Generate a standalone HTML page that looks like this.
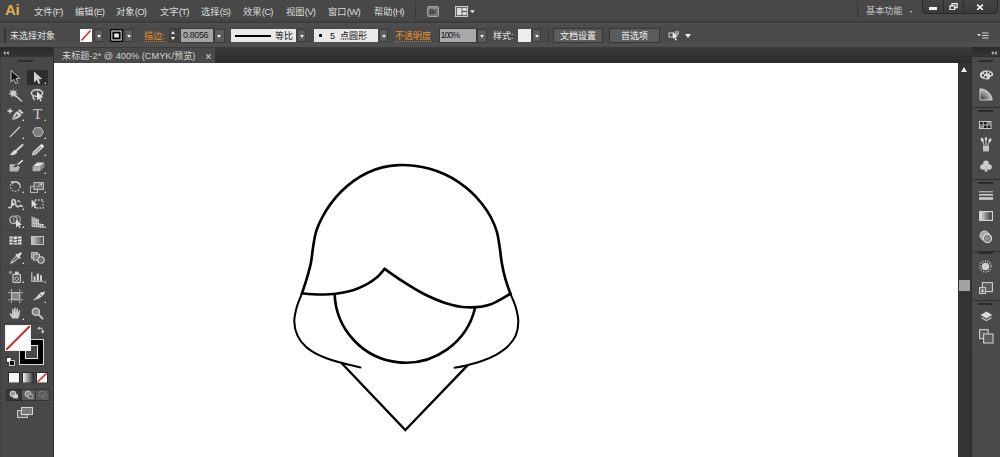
<!DOCTYPE html>
<html lang="zh-CN">
<head>
<meta charset="utf-8">
<title>未标题-2* @ 400% (CMYK/预览)</title>
<style>
html,body{margin:0;padding:0;}
body{width:1000px;height:457px;overflow:hidden;position:relative;background:#2f2f2f;
  font-family:"Liberation Sans","Noto Sans CJK SC",sans-serif;color:#e4e4e4;font-size:10px;line-height:1;}
.abs{position:absolute;}
#menubar{left:0;top:0;width:1000px;height:22px;background:linear-gradient(#484848 0,#484848 19px,#444 20px,#424242 22px);}
#menubar .mi{position:absolute;top:6.4px;font-size:9.2px;line-height:11px;color:#dcdcdc;white-space:nowrap;letter-spacing:0;}
#ctrlbar{left:0;top:22px;width:1000px;height:25px;border-top:1px solid #393939;box-sizing:border-box;background:linear-gradient(#515151 0,#4d4d4d 2px,#4a4a4a 5px,#4a4a4a 19px,#505050 20px,#4e4e4e 24px);}
#ctrlbar .t{position:absolute;font-size:9px;line-height:10px;white-space:nowrap;color:#e2e2e2;}
#tabbar{left:0;top:47px;width:1000px;height:16px;background:linear-gradient(#3c3c3c,#2b2b2b);}
#tab{left:54px;top:48px;width:161px;height:15px;background:#494949;border-radius:1px 1px 0 0;}
#canvas{left:54px;top:62.5px;width:904.3px;height:394.5px;background:#fff;}
#toolbar{left:0;top:57px;width:53px;height:400px;background:#484848;box-shadow:inset 1px 0 0 #3e3e3e;}
#toolhead{left:0;top:47px;width:53px;height:10px;background:linear-gradient(#2a2a2a,#363636);}
#vscroll{left:958.3px;top:62.5px;width:12.7px;height:394.5px;background:#343434;box-shadow:1px 0 0 #2b2b2b;}
#dock{left:971.8px;top:56px;width:28.2px;height:401px;background:#494949;}
#dockhead{left:972px;top:47px;width:28px;height:9px;background:linear-gradient(#2a2a2a,#363636);}
#menubar .la{font-size:9.6px;letter-spacing:-0.8px;margin-left:0.4px;}
.dd{position:absolute;width:9px;height:13px;background:#5c5c5c;border:1px solid #3a3a3a;box-sizing:border-box;}
.dd:after{content:"";position:absolute;left:2px;top:5px;border-left:2.5px solid transparent;border-right:2.5px solid transparent;border-top:3px solid #f0f0f0;}
.cn{position:absolute;width:0;height:0;border-left:2.5px solid transparent;border-bottom:2.5px solid #d6d6d6;}
.grp{position:absolute;left:0;width:28.2px;background:#4a4a4a;border-top:1px solid #2e2e2e;box-sizing:border-box;}
.grip{position:absolute;height:2px;background:#2c2c2c;}
.sep{position:absolute;left:5px;width:43px;height:1px;background:#404040;box-shadow:0 1px 0 #4c4c4c;}
</style>
</head>
<body>

<!-- ===== menu bar ===== -->
<div id="menubar" class="abs">
  <div class="abs" style="left:5px;top:2px;font-size:15px;line-height:16px;font-weight:bold;color:#e3ae4c;letter-spacing:-0.3px;">Ai</div>
  <div class="mi" style="left:34px;">文件<span class="la">(F)</span></div>
  <div class="mi" style="left:75px;">编辑<span class="la">(E)</span></div>
  <div class="mi" style="left:116px;">对象<span class="la">(O)</span></div>
  <div class="mi" style="left:160px;">文字<span class="la">(T)</span></div>
  <div class="mi" style="left:201px;">选择<span class="la">(S)</span></div>
  <div class="mi" style="left:243px;">效果<span class="la">(C)</span></div>
  <div class="mi" style="left:286px;">视图<span class="la">(V)</span></div>
  <div class="mi" style="left:328px;">窗口<span class="la">(W)</span></div>
  <div class="mi" style="left:374px;">帮助<span class="la">(H)</span></div>
  <div class="abs" style="left:415px;top:3px;width:1px;height:16px;background:#383838;"></div>
  <div class="mi" style="left:866px;top:5.5px;color:#c6c6c6;font-size:9.2px;">基本功能</div>
  <!-- Bridge icon -->
  <div class="abs" style="left:426.5px;top:6px;width:12.5px;height:10.5px;background:linear-gradient(#8a8a8a,#747474);border:1px solid #a2a2a2;border-radius:1.5px;box-sizing:border-box;"></div>
  <div class="abs" style="left:426.5px;top:7.5px;width:12.5px;text-align:center;font-size:7px;line-height:8px;font-weight:bold;color:#343434;letter-spacing:-0.2px;">Br</div>
  <!-- arrange documents icon -->
  <svg class="abs" style="left:455px;top:5.5px;" width="20.5" height="11" viewBox="0 0 22 12" preserveAspectRatio="none"><rect x="0.5" y="0.5" width="13" height="11" fill="#555" stroke="#d6d6d6" stroke-width="1"/><rect x="2" y="2" width="5" height="8" fill="#dcdcdc"/><rect x="8" y="2" width="4.5" height="3.4" fill="#dcdcdc"/><rect x="8" y="6.6" width="4.5" height="3.4" fill="#dcdcdc"/><path d="M16 4.6 L21.4 4.6 L18.7 8 Z" fill="#e6e6e6"/></svg>
  <div class="abs" style="left:857px;top:3px;width:1px;height:14px;background:#363636;"></div>
  <!-- workspace arrow -->
  <div class="abs" style="left:909.5px;top:11px;border-left:1.8px solid transparent;border-right:1.8px solid transparent;border-top:2.2px solid #d0d0d0;"></div>
  <!-- window buttons -->
  <div class="abs" style="left:922px;top:-1px;width:76px;height:15px;background:linear-gradient(#454545,#3b3b3b);border:1px solid #2a2a2a;border-radius:0 0 4px 4px;box-sizing:border-box;"></div>
  <div class="abs" style="left:943px;top:0;width:1px;height:13px;background:#2c2c2c;"></div>
  <div class="abs" style="left:963px;top:0;width:1px;height:13px;background:#2c2c2c;"></div>
  <div class="abs" style="left:929px;top:7px;width:8px;height:2.5px;background:#f2f2f2;"></div>
  <svg class="abs" style="left:948.5px;top:2.8px;" width="9" height="7.6" viewBox="0 0 10 9"><rect x="3.2" y="0.8" width="6" height="4.6" fill="none" stroke="#f2f2f2" stroke-width="1.5"/><rect x="0.8" y="3.4" width="5.6" height="4.6" fill="#474747" stroke="#f2f2f2" stroke-width="1.5"/></svg>
  <svg class="abs" style="left:976.3px;top:3.6px;" width="8" height="6.6" viewBox="0 0 9 8"><path d="M1 0.8 L8 7.2 M8 0.8 L1 7.2" stroke="#f4f4f4" stroke-width="1.9"/></svg>

</div>

<!-- ===== control bar ===== -->
<div id="ctrlbar" class="abs">
  <div class="abs" style="left:4px;top:5px;width:2px;height:15px;background:#353535;"></div>
  <div class="t" style="left:10px;top:8px;">未选择对象</div>
  <!-- fill swatch -->
  <svg class="abs" style="left:80px;top:6px;" width="12" height="13" viewBox="0 0 12 13"><rect x="0" y="0" width="12" height="13" fill="#fff"/><line x1="1.5" y1="11.5" x2="10.5" y2="1.5" stroke="#d2232a" stroke-width="1.4"/></svg>
  <div class="dd" style="left:94px;top:6px;"></div>
  <!-- stroke swatch -->
  <svg class="abs" style="left:109.5px;top:6px;" width="13" height="13" viewBox="0 0 14 13" preserveAspectRatio="none"><rect x="0" y="0" width="14" height="13" fill="#000"/><rect x="2" y="2" width="10" height="9" fill="none" stroke="#fff" stroke-width="1"/><rect x="4.5" y="4.5" width="5" height="4" fill="#e8e8e8"/></svg>
  <div class="dd" style="left:124px;top:6px;"></div>
  <div class="t" style="left:144px;top:8px;color:#e8932c;border-bottom:1px dotted #c07a28;padding-bottom:0;">描边:</div>
  <!-- spinner -->
  <div class="abs" style="left:169px;top:5px;width:10px;height:15px;background:#424242;border:1px solid #3a3a3a;box-sizing:border-box;"></div>
  <div class="abs" style="left:171px;top:8px;border-left:2.5px solid transparent;border-right:2.5px solid transparent;border-bottom:3px solid #eee;"></div>
  <div class="abs" style="left:171px;top:14px;border-left:2.5px solid transparent;border-right:2.5px solid transparent;border-top:3px solid #eee;"></div>
  <div class="abs" style="left:180px;top:5px;width:34px;height:15px;background:#a4a4a4;border:1px solid #3a3a3a;box-sizing:border-box;"></div>
  <div class="t" style="left:183px;top:7px;color:#1c1c1c;letter-spacing:-0.4px;">0.8056</div>
  <div class="dd" style="left:214px;top:5.5px;height:14px;width:10.5px;"></div>
  <!-- stroke profile -->
  <div class="abs" style="left:231px;top:6px;width:65px;height:13px;background:#e9e9e9;"></div>
  <div class="abs" style="left:235px;top:12px;width:36px;height:2px;background:#000;"></div>
  <div class="t" style="left:275px;top:8px;color:#111;">等比</div>
  <div class="dd" style="left:297px;top:6px;"></div>
  <!-- brush -->
  <div class="abs" style="left:314px;top:6px;width:64px;height:13px;background:#e9e9e9;"></div>
  <div class="abs" style="left:319px;top:11px;width:3px;height:3px;background:#000;border-radius:1px;"></div>
  <div class="t" style="left:330px;top:8px;color:#111;">5&nbsp; 点圆形</div>
  <div class="dd" style="left:379px;top:6px;"></div>
  <div class="t" style="left:395px;top:8px;color:#e8932c;border-bottom:1px dotted #c07a28;">不透明度</div>
  <div class="abs" style="left:438.5px;top:5px;width:38.5px;height:15px;background:#a9a9a9;border:1px solid #3a3a3a;box-sizing:border-box;"></div>
  <div class="t" style="left:440.5px;top:7px;color:#1c1c1c;letter-spacing:-1.1px;">100%</div>
  <div class="dd" style="left:477px;top:5.5px;height:14px;width:10px;"></div>
  <div class="t" style="left:493px;top:8px;">样式:</div>
  <div class="abs" style="left:518px;top:6px;width:13px;height:13px;background:#ededed;"></div>
  <div class="dd" style="left:532px;top:6px;"></div>
  <div class="abs" style="left:548px;top:3px;width:1px;height:19px;background:#3a3a3a;"></div>
  <div class="abs" style="left:553px;top:5px;width:50px;height:15px;background:#5b5b5b;border:1px solid #363636;box-sizing:border-box;"></div>
  <div class="t" style="left:553px;top:8px;width:50px;text-align:center;color:#f2f2f2;">文档设置</div>
  <div class="abs" style="left:609px;top:5px;width:51px;height:15px;background:#5b5b5b;border:1px solid #363636;box-sizing:border-box;"></div>
  <div class="t" style="left:609px;top:8px;width:51px;text-align:center;color:#f2f2f2;">首选项</div>
  <!-- misc icon -->
  <svg class="abs" style="left:668px;top:7px;" width="13" height="12" viewBox="0 0 13 12"><rect x="1" y="3" width="4" height="4" fill="none" stroke="#cfcfcf" stroke-width="1"/><rect x="7" y="1" width="4" height="4" fill="#9a9a9a"/><path d="M5 2 L10 6.5 L7.5 7 L9 10 L7.5 10.5 L6.3 7.6 L5 9 Z" fill="#e6e6e6"/></svg>
  <div class="abs" style="left:685px;top:11px;border-left:3px solid transparent;border-right:3px solid transparent;border-top:4px solid #eee;"></div>
  <!-- panel menu icon -->
  <svg class="abs" style="left:977px;top:9px;" width="12" height="8" viewBox="0 0 12 8"><path d="M0 2 L4 2 L2 4.5 Z" fill="#d8d8d8"/><rect x="5" y="0.5" width="6.5" height="1" fill="#d0d0d0"/><rect x="5" y="3" width="6.5" height="1" fill="#d0d0d0"/><rect x="5" y="5.5" width="6.5" height="1" fill="#d0d0d0"/></svg>
</div>

<!-- ===== tab bar ===== -->
<div id="tabbar" class="abs"></div>
<div id="tab" class="abs">
  <div class="abs" style="left:8px;top:3px;font-size:9.2px;line-height:11px;color:#d4d4d4;white-space:nowrap;">未标题-2* @ 400% (CMYK/预览)</div>
  <svg class="abs" style="left:151.5px;top:6px;" width="5" height="5" viewBox="0 0 6 6"><path d="M0.5 0.5 L5.5 5.5 M5.5 0.5 L0.5 5.5" stroke="#c8c8c8" stroke-width="1.3"/></svg>
</div>

<!-- ===== canvas ===== -->
<div id="canvas" class="abs">
<svg width="904" height="394" viewBox="54 63 904 394" style="position:absolute;left:0;top:0.5px;" fill="none" stroke="#000" stroke-width="2.65" stroke-linecap="round" stroke-linejoin="round">
  <path d="M302.0 293.3 C302.8 290.8 305.4 283.2 306.9 278.1 C308.4 273.0 309.9 267.9 310.9 262.7 C312.0 257.5 312.2 252.1 313.1 246.9 C314.0 241.7 314.6 236.4 316.2 231.3 C317.7 226.3 320.0 221.5 322.5 216.8 C324.9 212.2 327.9 207.6 331.0 203.4 C334.2 199.1 337.7 195.0 341.5 191.3 C345.3 187.5 349.4 184.0 353.7 180.9 C358.0 177.8 362.6 175.0 367.4 172.7 C372.2 170.5 377.2 168.7 382.3 167.4 C387.5 166.2 392.8 165.4 398.1 165.1 C403.4 164.8 408.8 165.1 414.1 165.7 C419.3 166.3 424.6 167.3 429.7 168.8 C434.8 170.2 439.9 172.1 444.7 174.3 C449.5 176.5 454.2 179.2 458.6 182.1 C463.0 185.0 467.2 188.4 471.1 192.0 C475.0 195.5 478.6 199.5 481.9 203.7 C485.2 207.8 488.2 212.3 490.7 217.0 C493.2 221.6 495.3 226.6 496.8 231.6 C498.3 236.7 498.8 242.0 499.7 247.2 C500.5 252.5 500.9 257.9 501.8 263.1 C502.7 268.3 503.8 273.5 505.3 278.6 C506.7 283.7 509.5 291.2 510.4 293.7"/><!-- dome -->
  <path d="M302.0 293.3 C303.8 293.5 309.3 294.1 313.0 294.3 C316.8 294.5 320.6 294.6 324.4 294.5 C328.1 294.4 332.0 294.1 335.8 293.7 C339.5 293.2 343.3 292.6 347.0 291.7 C350.7 290.8 354.3 289.8 357.8 288.4 C361.3 287.1 364.7 285.5 367.9 283.7 C371.1 281.8 374.2 279.7 377.0 277.3 C379.8 274.8 383.3 270.3 384.6 268.9"/><!-- fringeL -->
  <path d="M384.6 268.9 C387.7 271.0 396.7 277.6 403.2 281.7 C409.7 285.9 416.5 290.2 423.5 293.8 C430.5 297.3 437.8 300.7 445.1 302.9 C452.4 305.2 459.9 307.0 467.3 307.3 C474.7 307.6 482.3 307.1 489.4 304.8 C496.6 302.6 506.9 295.6 510.4 293.7"/><!-- fringeR -->
  <path stroke-width="2.05" d="M302.0 293.3 C301.1 295.6 298.1 302.2 296.8 307.0 C295.5 311.7 294.2 316.9 294.3 321.7 C294.4 326.5 295.5 331.4 297.5 335.6 C299.4 339.8 302.4 343.5 305.9 346.7 C309.3 349.9 313.6 352.4 318.0 354.7 C322.4 357.0 327.4 358.7 332.3 360.3 C337.1 361.9 342.2 363.1 346.9 364.2 C351.6 365.4 358.2 366.9 360.5 367.4"/><!-- sideL -->
  <path stroke-width="2.05" d="M510.4 293.7 C511.3 295.9 514.4 302.4 515.7 307.1 C517.0 311.7 518.3 316.9 518.3 321.6 C518.3 326.3 517.6 331.1 515.8 335.3 C514.0 339.4 511.0 343.2 507.7 346.5 C504.4 349.7 500.2 352.4 496.0 354.8 C491.8 357.2 487.0 359.1 482.4 360.7 C477.8 362.4 472.9 363.7 468.2 364.9 C463.6 366.1 456.9 367.3 454.6 367.8"/><!-- sideR -->
  <path d="M334.64 294 A71.2 71.2 0 0 0 475.11 307.8"/><!-- face -->
  <path stroke-width="2.3" d="M341.5 363 L405.3 430 L467.3 365.6" stroke-linejoin="miter"/><!-- chin -->
</svg>
</div>

<!-- ===== left toolbar ===== -->
<div id="toolhead" class="abs"><svg class="abs" style="left:3px;top:3.6px;" width="6" height="4" viewBox="0 0 7 5" preserveAspectRatio="none"><path d="M3 0 L3 5 L0.3 2.5 Z M6.6 0 L6.6 5 L3.9 2.5 Z" fill="#c4c4c4"/></svg></div>
<div id="toolbar" class="abs">
<!--TOOLS-->
  <div class="grip" style="left:18.4px;top:3px;width:15px;"></div>
  <div class="abs" style="left:27px;top:13px;width:20.5px;height:15px;background:#2d2d2d;border-radius:1px;"></div>
  <svg class="abs" style="left:10px;top:13px;" width="11" height="14" viewBox="0 0 11 14"><path d="M1 0.5 L1 12 L3.9 9.3 L5.9 13.6 L7.9 12.7 L5.9 8.5 L9.8 8.3 Z" fill="#111" stroke="#c4c4c4" stroke-width="1"/></svg>
  <svg class="abs" style="left:33px;top:14px;" width="11" height="14" viewBox="0 0 11 14"><path d="M1 0.5 L1 11.5 L3.7 9 L5.6 13 L7.4 12.2 L5.6 8.2 L9.2 8 Z" fill="#d2d2d2"/></svg>
  <div class="cn" style="left:44.3px;top:25px;"></div>
  <svg class="abs" style="left:8px;top:31px;" width="15" height="14" viewBox="0 0 15 14"><path d="M5 0.5 L6 3.2 L8.8 2 L7.6 4.6 L10 6 L7.3 6.6 L7.6 9.5 L5.4 7.6 L3.2 9.6 L3.3 6.8 L0.5 6 L3 4.6 L1.6 2 L4.3 3.2 Z" fill="#cdcdcd"/><path d="M7 7 L13.5 13" stroke="#cdcdcd" stroke-width="1.6" stroke-linecap="round"/></svg>
  <svg class="abs" style="left:30px;top:31px;" width="15" height="14" viewBox="0 0 15 14"><ellipse cx="7" cy="5" rx="5.6" ry="3.4" fill="none" stroke="#cdcdcd" stroke-width="1.6"/><path d="M3.3 7.5 C2.5 9.5 3.5 11 5 12" stroke="#cdcdcd" stroke-width="1.4" fill="none"/><path d="M7 3 L7 12.5 L9 10.4 L10.4 13.4 L11.8 12.7 L10.4 9.9 L13.2 9.6 Z" fill="#dcdcdc"/></svg>
  <svg class="abs" style="left:7px;top:51px;" width="18" height="13" viewBox="0 0 18 13"><path d="M0.5 3 H5.5 M3 0.5 V5.5" stroke="#e0e0e0" stroke-width="1.3"/><path d="M12.5 1 L16.5 4.8 L15 6.2 L11 2.4 Z" fill="#cdcdcd"/><path d="M10.5 3 L14.4 6.8 C13.5 9.5 10 11 4.5 12.3 C6 8 7.5 4.5 10.5 3 Z" fill="#cdcdcd"/><circle cx="9.8" cy="7.4" r="1" fill="#4a4a4a"/><path d="M4.8 12 L9 8" stroke="#4a4a4a" stroke-width="0.8"/></svg>
  <div class="cn" style="left:22.3px;top:61.5px;"></div>
  <div class="abs" style="left:32px;top:49.5px;width:11px;font-family:'Liberation Serif',serif;font-size:15px;line-height:15px;color:#cdcdcd;text-align:center;">T</div>
  <div class="cn" style="left:44.3px;top:61.5px;"></div>
  <svg class="abs" style="left:9px;top:69px;" width="12" height="12" viewBox="0 0 12 12"><path d="M1.2 10.6 L10.6 1.2" stroke="#cdcdcd" stroke-width="1.3" stroke-linecap="round"/></svg>
  <div class="cn" style="left:22.3px;top:79.5px;"></div>
  <svg class="abs" style="left:31.5px;top:69.5px;" width="12" height="10" viewBox="0 0 12 10"><path d="M3.2 0.7 L8.8 0.7 L11.4 5 L8.8 9.3 L3.2 9.3 L0.6 5 Z" fill="#7c7c7c" stroke="#bdbdbd" stroke-width="1"/></svg>
  <div class="cn" style="left:44.3px;top:79.5px;"></div>
  <svg class="abs" style="left:8.5px;top:86.5px;" width="15" height="12" viewBox="0 0 15 12"><path d="M13.4 1 L7 7" stroke="#cdcdcd" stroke-width="2.3" stroke-linecap="round"/><path d="M6.2 5.8 L8.4 8 C7 11 3.5 11.4 0.6 11 C2.6 10 3 7 6.2 5.8 Z" fill="#d8d8d8"/></svg>
  <svg class="abs" style="left:31px;top:87px;" width="13" height="12" viewBox="0 0 13 12"><path d="M8.6 1.4 L11.6 4.2 L4.8 10.8 L0.8 11.6 L1.8 7.8 Z" fill="#cdcdcd"/><path d="M9.2 0.9 C10.2 -0.1 11.6 0.1 12.3 0.9 C13 1.8 12.9 2.9 12.2 3.6 L11.6 4.2 L8.6 1.4 Z" fill="#ececec"/><path d="M3 9.6 L9.8 3" stroke="#6a6a6a" stroke-width="0.9"/></svg>
  <div class="cn" style="left:44.3px;top:97px;"></div>
  <svg class="abs" style="left:9px;top:103px;" width="14" height="12" viewBox="0 0 14 12"><path d="M0.6 4.2 L6 4.2 L11 7 L9 11.4 L0.6 11.4 Z" fill="#b8b8b8"/><path d="M13.4 0.6 L8 5" stroke="#dadada" stroke-width="1.6" stroke-linecap="round"/><path d="M8.6 4.2 C9.5 6 6.5 7.6 4 7.2 C5.4 6.4 6 4.6 8.6 4.2 Z" fill="#3a3a3a"/></svg>
  <svg class="abs" style="left:31.5px;top:105px;" width="13" height="10" viewBox="0 0 13 10"><path d="M5 0.6 L12.4 0.6 L8 4.6 L0.6 4.6 Z" fill="#e0e0e0"/><path d="M0.6 4.6 L8 4.6 L8 9.2 L0.6 9.2 Z" fill="#b0b0b0"/><path d="M8 4.6 L12.4 0.6 L12.4 5 L8 9.2 Z" fill="#8c8c8c"/></svg>
  <div class="cn" style="left:44.3px;top:115px;"></div>
  <svg class="abs" style="left:9px;top:123px;" width="13" height="13" viewBox="0 0 13 13"><circle cx="6.3" cy="6.6" r="4.8" fill="none" stroke="#b4b4b4" stroke-width="1.4" stroke-dasharray="1.6 1.5"/><path d="M3 3 A4.8 4.8 0 0 1 11 5.6" fill="none" stroke="#cdcdcd" stroke-width="1.5"/><path d="M1.2 1.6 L5 1.2 L3.8 4.8 Z" fill="#cdcdcd"/></svg>
  <div class="cn" style="left:22.3px;top:133.5px;"></div>
  <svg class="abs" style="left:29.8px;top:124.5px;" width="14" height="11" viewBox="0 0 14 11"><rect x="0.6" y="4.4" width="7" height="6" fill="none" stroke="#bdbdbd" stroke-width="1"/><rect x="4" y="0.6" width="9.4" height="6.8" fill="#6a6a6a" stroke="#c8c8c8" stroke-width="1"/><path d="M7 5.6 L11.4 2 M11.6 1.8 L9 2 M11.6 1.8 L11.4 4.4" stroke="#d8d8d8" stroke-width="0.8" fill="none"/></svg>
  <div class="cn" style="left:44.3px;top:133.5px;"></div>
  <svg class="abs" style="left:8px;top:141px;" width="15" height="12" viewBox="0 0 15 12"><path d="M1 9.5 C3.5 10.5 4.5 7 4 4 C3.8 2 5.6 0.8 6.8 2.2 C8 3.8 6.6 6.6 8.6 8.4 C10.4 9.8 12 6 14.2 8.4" fill="none" stroke="#cdcdcd" stroke-width="1.7" stroke-linecap="round"/><circle cx="5" cy="6.2" r="1.4" fill="#e0e0e0"/><path d="M9 3.4 C10.4 2.4 12 3 12.4 4.4" fill="none" stroke="#cdcdcd" stroke-width="1.2"/></svg>
  <div class="cn" style="left:22.3px;top:150.5px;"></div>
  <svg class="abs" style="left:30.5px;top:141.5px;" width="13" height="10" viewBox="0 0 13 10"><rect x="4" y="1" width="8" height="8" fill="none" stroke="#cdcdcd" stroke-width="1.3" stroke-dasharray="1.6 1.4"/><path d="M0.6 0.6 L0.6 8.6 L2.6 6.6 L4 9.4 L5.2 8.8 L3.9 6.2 L6.4 6 Z" fill="#dcdcdc"/></svg>
  <svg class="abs" style="left:8.5px;top:158px;" width="15" height="13" viewBox="0 0 15 13"><circle cx="4.6" cy="4.8" r="3.8" fill="none" stroke="#bdbdbd" stroke-width="1.2"/><circle cx="8" cy="4.2" r="3.4" fill="none" stroke="#a8a8a8" stroke-width="1.1"/><path d="M7 4.4 L7 12.6 L9 10.6 L10.4 13 L11.6 12.4 L10.3 10 L13 9.8 Z" fill="#dedede"/></svg>
  <div class="cn" style="left:22.3px;top:168.5px;"></div>
  <svg class="abs" style="left:30.5px;top:158.5px;" width="14" height="12" viewBox="0 0 14 12"><path d="M1 0.6 L1 10.4 L13 11.4 L13 8.2 L7.4 7.4 L7.4 3 Z" fill="#8a8a8a"/><path d="M1 0.6 V10.4 M3.2 1.4 V10.6 M5.4 2.2 V10.8 M7.4 3 V11 M9.4 7.8 V11.2 M11.4 8 V11.3 M1 3.6 L7.4 5 M1 6.8 L13 8.8 M1 10.4 L13 11.4" stroke="#d6d6d6" stroke-width="0.8" fill="none"/></svg>
  <div class="cn" style="left:44.3px;top:168.5px;"></div>
  <svg class="abs" style="left:9px;top:179px;" width="13" height="9" viewBox="0 0 13 9"><rect x="0.5" y="0.5" width="12" height="8" fill="#e6e6e6"/><path d="M0.5 3 C3 1.6 5 5.4 7 3.6 C9 2 10.6 4 12.5 2.6 M0.5 6.2 C3 5 5 8 7.4 6.4 C9.4 5 11 7 12.5 5.8 M4 0.5 C5.2 3 2.6 5.6 4.4 8.5 M8.4 0.5 C9.6 3 7.2 5.6 8.8 8.5" stroke="#3a3a3a" stroke-width="0.9" fill="none"/></svg>
  <svg class="abs" style="left:31px;top:179px;" width="13" height="9" viewBox="0 0 13 9"><defs><linearGradient id="gt" x1="0" x2="1" y1="0" y2="0"><stop offset="0" stop-color="#cfcfcf"/><stop offset="1" stop-color="#4c4c4c"/></linearGradient></defs><rect x="0.5" y="0.5" width="12" height="8" fill="url(#gt)" stroke="#c4c4c4" stroke-width="1"/></svg>
  <svg class="abs" style="left:9.5px;top:195px;" width="13" height="12" viewBox="0 0 13 12"><path d="M1 11 L2.2 8.2 L7.2 3.4 L8.8 5 L3.8 9.8 Z" fill="none" stroke="#cdcdcd" stroke-width="1.1"/><path d="M6.4 2.6 L9.6 5.8" stroke="#dedede" stroke-width="1.8" stroke-linecap="round"/><path d="M8.2 3.8 L10.4 1.6" stroke="#dedede" stroke-width="2.6" stroke-linecap="round"/></svg>
  <div class="cn" style="left:22.3px;top:205px;"></div>
  <svg class="abs" style="left:30.5px;top:195px;" width="14" height="12" viewBox="0 0 14 12"><rect x="0.6" y="0.6" width="6" height="6" fill="#8a8a8a" stroke="#cdcdcd" stroke-width="0.9"/><rect x="2.6" y="2.2" width="6" height="6" fill="#7a7a7a" stroke="#cdcdcd" stroke-width="0.9"/><circle cx="10" cy="8" r="3.2" fill="#6e6e6e" stroke="#d4d4d4" stroke-width="1.1"/></svg>
  <svg class="abs" style="left:8px;top:212.5px;" width="14" height="13" viewBox="0 0 14 13"><rect x="5" y="4.4" width="7.4" height="8" rx="1" fill="none" stroke="#cdcdcd" stroke-width="1.2"/><rect x="7" y="1.6" width="3.6" height="2.4" fill="#cdcdcd"/><circle cx="8.7" cy="8.6" r="1.8" fill="none" stroke="#cdcdcd" stroke-width="1"/><path d="M0.6 2.4 H4.4 M2.5 0.6 V4.4 M1 1 L4 4 M4 1 L1 4" stroke="#9c9c9c" stroke-width="0.7"/></svg>
  <div class="cn" style="left:22.3px;top:224px;"></div>
  <svg class="abs" style="left:31px;top:215px;" width="13" height="10" viewBox="0 0 13 10"><path d="M0.8 0.4 V9.2 H12.6" stroke="#cdcdcd" stroke-width="1.1" fill="none"/><rect x="2.6" y="4.4" width="2" height="4.4" fill="#cdcdcd"/><rect x="5.8" y="1.6" width="2" height="7.2" fill="#e0e0e0"/><rect x="9" y="3.2" width="2" height="5.6" fill="#cdcdcd"/></svg>
  <div class="cn" style="left:44.3px;top:224px;"></div>
  <svg class="abs" style="left:8px;top:232px;" width="15" height="14" viewBox="0 0 15 14"><rect x="3.4" y="3.6" width="8.4" height="7.2" fill="#8a8a8a" stroke="#cdcdcd" stroke-width="1"/><path d="M0.4 3.6 H2.4 M12.8 3.6 H14.8 M0.4 10.8 H2.4 M12.8 10.8 H14.8 M3.4 0.4 V2.4 M11.8 0.4 V2.4 M3.4 12 V13.8 M11.8 12 V13.8" stroke="#cdcdcd" stroke-width="1"/></svg>
  <svg class="abs" style="left:31.5px;top:234px;" width="14" height="10" viewBox="0 0 14 10"><path d="M13.4 0.4 L8.6 1.6 L4.8 5.6 L7.6 7.2 L11.4 4 Z" fill="#dcdcdc"/><path d="M5 5.4 L0.6 9.6 L7.4 7.4 Z" fill="#cdcdcd"/><path d="M7.4 3 L10 5" stroke="#5a5a5a" stroke-width="0.9"/></svg>
  <div class="cn" style="left:44.3px;top:243.5px;"></div>
  <svg class="abs" style="left:9px;top:250px;" width="13" height="12" viewBox="0 0 13 12"><path d="M3.4 11.6 C2.4 9.8 1 8.4 0.6 6.8 C0.4 6 1.4 5.6 2 6.4 L3.2 7.8 L3 2.4 C3 1.4 4.4 1.4 4.5 2.4 L4.9 5.6 L5.2 1.2 C5.3 0.2 6.7 0.2 6.7 1.2 L6.8 5.6 L7.6 1.8 C7.8 0.9 9.1 1.1 9 2.1 L8.7 6 L9.9 3.6 C10.3 2.8 11.5 3.3 11.2 4.2 C10.6 6.4 10.4 9.4 9.2 11.6 Z" fill="#cdcdcd"/></svg>
  <div class="cn" style="left:22.3px;top:261px;"></div>
  <svg class="abs" style="left:31px;top:249.5px;" width="13" height="13" viewBox="0 0 13 13"><circle cx="4.8" cy="4.8" r="3.6" fill="#8a8a8a" stroke="#cdcdcd" stroke-width="1.3"/><path d="M7.6 7.6 L11.6 11.6" stroke="#cdcdcd" stroke-width="2" stroke-linecap="round"/></svg>
  <div class="sep" style="top:47px;"></div>
  <div class="sep" style="top:119.5px;"></div>
  <div class="sep" style="top:173px;"></div>
  <div class="sep" style="top:209px;"></div>
  <div class="sep" style="top:265.5px;"></div>
  <svg class="abs" style="left:18.5px;top:281.5px;" width="25" height="26" viewBox="0 0 25 26"><rect x="0.5" y="0.5" width="24" height="25" fill="#000" stroke="#d8d8d8" stroke-width="1"/><rect x="6.5" y="6.5" width="12" height="13" fill="#4a4a4a" stroke="#e6e6e6" stroke-width="1"/></svg>
  <svg class="abs" style="left:4.5px;top:268px;" width="26" height="26" viewBox="0 0 26 26"><rect x="0" y="0" width="26" height="26" fill="#fff"/><path d="M1 25 L25 1" stroke="#d2232a" stroke-width="1.8"/><rect x="0.5" y="0.5" width="25" height="25" fill="none" stroke="#ededed" stroke-width="1"/></svg>
  <svg class="abs" style="left:36.5px;top:269px;" width="8" height="8" viewBox="0 0 8 8"><path d="M1.4 2.2 C4 1.4 6 3 5.8 5.8" fill="none" stroke="#cdcdcd" stroke-width="1.1"/><path d="M0.2 2.4 L2.6 0.4 L2.6 4 Z M5.8 7.8 L3.8 5.2 L7.6 5.2 Z" fill="#cdcdcd"/></svg>
  <svg class="abs" style="left:5.5px;top:300px;" width="9" height="9" viewBox="0 0 9 9"><rect x="0.5" y="0.5" width="5" height="5" fill="#fff" stroke="#222" stroke-width="0.8"/><rect x="3.5" y="3.5" width="5" height="5" fill="#111" stroke="#eee" stroke-width="0.8"/></svg>
  <svg class="abs" style="left:7.5px;top:314.5px;" width="12" height="11.5" viewBox="0 0 12 11.5"><rect x="0.5" y="0.5" width="11" height="10.5" fill="#f6f6f6" stroke="#2a2a2a" stroke-width="1"/></svg>
  <svg class="abs" style="left:21.5px;top:314.5px;" width="12" height="11.5" viewBox="0 0 12 11.5"><defs><linearGradient id="g2" x1="0" x2="1"><stop offset="0" stop-color="#fafafa"/><stop offset="1" stop-color="#333"/></linearGradient></defs><rect x="0.5" y="0.5" width="11" height="10.5" fill="url(#g2)" stroke="#2a2a2a" stroke-width="1"/></svg>
  <svg class="abs" style="left:35.5px;top:314.5px;" width="12" height="11.5" viewBox="0 0 12 11.5"><rect x="0.5" y="0.5" width="11" height="10.5" fill="#fff" stroke="#2a2a2a" stroke-width="1"/><path d="M1.5 10 L10.5 1.5" stroke="#d2232a" stroke-width="1.6"/></svg>
  <div class="abs" style="left:6px;top:331.5px;width:44px;height:12px;background:#595959;border:1px solid #333;box-sizing:border-box;"></div>
  <div class="abs" style="left:6px;top:331.5px;width:15px;height:12px;background:#383838;border:1px solid #2c2c2c;box-sizing:border-box;"></div>
  <div class="abs" style="left:20.5px;top:332.5px;width:1px;height:10px;background:#333;"></div>
  <div class="abs" style="left:35px;top:332.5px;width:1px;height:10px;background:#333;"></div>
  <svg class="abs" style="left:9px;top:333px;" width="10" height="9" viewBox="0 0 10 9"><circle cx="4" cy="4" r="3" fill="#9a9a9a" stroke="#ddd" stroke-width="0.9"/><rect x="4.4" y="4.4" width="4.6" height="4" fill="#cfcfcf"/></svg>
  <svg class="abs" style="left:23.5px;top:333px;" width="10" height="9" viewBox="0 0 10 9"><circle cx="4" cy="4" r="3" fill="#8c8c8c" stroke="#c8c8c8" stroke-width="0.9"/><rect x="4.4" y="4.4" width="4.6" height="4" fill="#6c6c6c" stroke="#bbb" stroke-width="0.6"/></svg>
  <svg class="abs" style="left:38px;top:333px;" width="10" height="9" viewBox="0 0 10 9"><circle cx="4" cy="4" r="3" fill="none" stroke="#777" stroke-width="0.9"/><rect x="4.4" y="4.4" width="4.6" height="4" fill="none" stroke="#777" stroke-width="0.6"/></svg>
  <svg class="abs" style="left:17px;top:349.5px;" width="16" height="11" viewBox="0 0 16 11"><rect x="0.5" y="3.5" width="10" height="7" fill="#6a6a6a" stroke="#c8c8c8" stroke-width="1"/><rect x="4.5" y="0.5" width="11" height="7" fill="#7a7a7a" stroke="#d8d8d8" stroke-width="1"/></svg>
<!--/TOOLS-->
</div>

<!-- ===== right scrollbar and dock ===== -->
<div id="vscroll" class="abs"><div class="abs" style="left:2.4px;top:4.6px;border-left:3.8px solid transparent;border-right:3.8px solid transparent;border-bottom:5px solid #ececec;"></div><div class="abs" style="left:0.8px;top:217.5px;width:11.4px;height:11px;background:#a2a2a2;"></div></div>
<div id="dockhead" class="abs"><svg class="abs" style="left:19px;top:3.5px;" width="6" height="4" viewBox="0 0 7 5" preserveAspectRatio="none"><path d="M3 0 L3 5 L0.3 2.5 Z M6.6 0 L6.6 5 L3.9 2.5 Z" fill="#c4c4c4"/></svg></div>
<div id="dock" class="abs">
<!--DOCK-->
  <div class="grp" style="top:0px;height:51px;"></div>
  <div class="grip" style="left:6.5px;top:4.2px;width:14.5px;"></div>
  <div class="grp" style="top:51px;height:71.5px;"></div>
  <div class="grip" style="left:6.5px;top:54px;width:14.5px;"></div>
  <div class="grp" style="top:122.5px;height:72px;"></div>
  <div class="grip" style="left:6.5px;top:126px;width:14.5px;"></div>
  <div class="grp" style="top:194.5px;height:49px;"></div>
  <div class="grip" style="left:6.5px;top:196.3px;width:14.5px;"></div>
  <div class="grp" style="top:243.5px;height:51px;"></div>
  <div class="grip" style="left:6.5px;top:247px;width:14.5px;"></div>
  <svg class="abs" style="left:7px;top:14px;" width="15" height="10" viewBox="0 0 15 10"><path d="M7.6 0.6 C12 0.6 14.4 2.6 14.2 4.8 C14 6.4 12.2 6.2 11.4 6.8 C10.6 7.6 11.6 8.6 9.6 9.2 C6 10 0.8 8.4 0.8 5 C0.8 2.4 4 0.6 7.6 0.6 Z" fill="#d2d2d2"/><circle cx="4" cy="5.4" r="1.1" fill="#333"/><circle cx="6.6" cy="7.2" r="1.1" fill="#333"/><circle cx="6" cy="3" r="1" fill="#333"/><circle cx="9.4" cy="2.6" r="1" fill="#333"/><circle cx="11.6" cy="4" r="0.9" fill="#333"/></svg>
  <svg class="abs" style="left:7px;top:32px;" width="14" height="13" viewBox="0 0 14 13"><defs><radialGradient id="cg" cx="0" cy="1" r="1"><stop offset="0" stop-color="#2a2a2a"/><stop offset="1" stop-color="#c8c8c8"/></radialGradient></defs><path d="M1 0.8 C7.4 1 12.6 5.6 13.2 12 L1 12 Z" fill="url(#cg)" stroke="#d0d0d0" stroke-width="1"/></svg>
  <svg class="abs" style="left:7.5px;top:64.5px;" width="12.5" height="8" viewBox="0 0 12.5 8"><rect x="0.5" y="0.5" width="11.5" height="7" fill="#1c1c1c" stroke="#c8c8c8" stroke-width="1"/><path d="M4.3 0.5 V7.5 M8.2 0.5 V7.5 M0.5 4 H12" stroke="#c8c8c8" stroke-width="0.9"/><rect x="8.6" y="1" width="3" height="2.6" fill="#8a8a8a"/><rect x="1" y="4.4" width="3" height="2.6" fill="#8a8a8a"/></svg>
  <svg class="abs" style="left:8px;top:81px;" width="12" height="15" viewBox="0 0 12 15"><rect x="3" y="8.6" width="6" height="5.8" fill="#c4c4c4"/><path d="M4.2 8.4 L2.4 3 M6 8.4 L6 1.4 M7.8 8.4 L10 3.4" stroke="#bdbdbd" stroke-width="1.1"/><ellipse cx="2.2" cy="2.8" rx="1.3" ry="2.2" fill="#dcdcdc" transform="rotate(-20 2.2 2.8)"/><ellipse cx="6" cy="1.8" rx="1.1" ry="1.8" fill="#dcdcdc"/><ellipse cx="10" cy="3.2" rx="1.3" ry="2" fill="#dcdcdc" transform="rotate(25 10 3.2)"/></svg>
  <svg class="abs" style="left:8px;top:104px;" width="12" height="12" viewBox="0 0 12 12"><circle cx="6" cy="3.2" r="2.8" fill="#cdcdcd"/><circle cx="3" cy="7" r="2.8" fill="#cdcdcd"/><circle cx="9" cy="7" r="2.8" fill="#cdcdcd"/><path d="M6 5 L7.6 11.4 L4.4 11.4 Z" fill="#cdcdcd"/></svg>
  <svg class="abs" style="left:7.5px;top:135px;" width="14" height="9" viewBox="0 0 14 9"><rect x="0" y="0.3" width="14" height="1" fill="#cdcdcd"/><rect x="0" y="3" width="14" height="1.6" fill="#cdcdcd"/><rect x="0" y="6.2" width="14" height="2.6" fill="#cdcdcd"/></svg>
  <svg class="abs" style="left:7.5px;top:155px;" width="14" height="10" viewBox="0 0 14 10"><defs><linearGradient id="gd" x1="0" x2="1"><stop offset="0" stop-color="#e8e8e8"/><stop offset="1" stop-color="#2e2e2e"/></linearGradient></defs><rect x="0.6" y="0.6" width="12.8" height="8.8" fill="url(#gd)" stroke="#cfcfcf" stroke-width="1.2"/></svg>
  <svg class="abs" style="left:7px;top:174px;" width="14" height="14" viewBox="0 0 14 14"><circle cx="5.6" cy="5.6" r="4.6" fill="#a8a8a8" stroke="#d4d4d4" stroke-width="1"/><circle cx="8.4" cy="8.4" r="4.2" fill="#7c7c7c" stroke="#d8d8d8" stroke-width="1.2"/><circle cx="8.4" cy="8.4" r="2.4" fill="#8e8e8e"/></svg>
  <svg class="abs" style="left:7.5px;top:204px;" width="13" height="13" viewBox="0 0 13 13"><circle cx="6.5" cy="6.5" r="5.6" fill="none" stroke="#c4c4c4" stroke-width="1.2" stroke-dasharray="1.3 1.2"/><circle cx="6.5" cy="6.5" r="3.8" fill="#d0d0d0"/></svg>
  <svg class="abs" style="left:7.5px;top:226px;" width="14" height="13" viewBox="0 0 14 13"><rect x="3.4" y="0.6" width="10" height="9" fill="#5a5a5a" stroke="#cdcdcd" stroke-width="1.1"/><rect x="0.6" y="5.6" width="6" height="6" fill="#6a6a6a" stroke="#cdcdcd" stroke-width="1"/><path d="M2 9 L5 9 M3.6 7.2 L3.6 10.4" stroke="#e0e0e0" stroke-width="0.9"/></svg>
  <svg class="abs" style="left:8px;top:255px;" width="13" height="12" viewBox="0 0 13 12"><path d="M6.4 0.6 L12.2 4 L6.4 7.4 L0.6 4 Z" fill="#dadada"/><path d="M1.4 6.6 L6.4 9.6 L11.4 6.6" fill="none" stroke="#bdbdbd" stroke-width="1.3"/></svg>
  <svg class="abs" style="left:7px;top:273px;" width="15" height="15" viewBox="0 0 15 15"><rect x="0.6" y="0.6" width="8.6" height="9" fill="#5c5c5c" stroke="#cdcdcd" stroke-width="1.1"/><rect x="4.6" y="5" width="9.4" height="9" fill="#5c5c5c" stroke="#cdcdcd" stroke-width="1.1"/></svg>
<!--/DOCK-->
</div>

</body>
</html>
